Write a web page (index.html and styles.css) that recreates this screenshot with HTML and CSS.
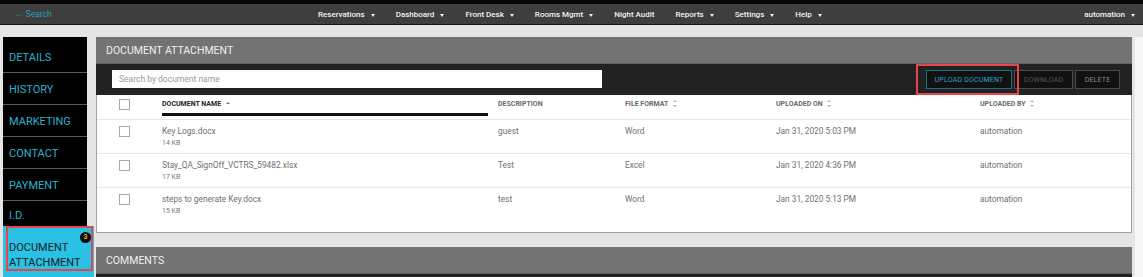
FILE: index.html
```html
<!DOCTYPE html>
<html lang="en">
<head>
    <meta charset="UTF-8">
    <meta name="viewport" content="width=device-width, initial-scale=1.0">
    <title>Document Attachment</title>
    <link rel="stylesheet" href="styles.css">
</head>
<body>

<div class="topstrip"></div>

<nav class="navbar">
    <a class="back-link" href="#">&larr; Search</a>
    <ul class="menu">
        <li class="caret">Reservations</li>
        <li class="caret">Dashboard</li>
        <li class="caret">Front Desk</li>
        <li class="caret">Rooms Mgmt</li>
        <li>Night Audit</li>
        <li class="caret">Reports</li>
        <li class="caret">Settings</li>
        <li class="caret">Help</li>
    </ul>
    <div class="user caret">automation</div>
</nav>

<div class="layout">
    <aside class="sidebar">
        <div class="side-list">
            <a class="side-item" href="#">DETAILS</a>
            <a class="side-item" href="#">HISTORY</a>
            <a class="side-item" href="#">MARKETING</a>
            <a class="side-item" href="#">CONTACT</a>
            <a class="side-item" href="#">PAYMENT</a>
            <a class="side-item last" href="#">I.D.</a>
        </div>
        <a class="side-active" href="#">
            DOCUMENT<br>ATTACHMENT
            <span class="badge">3</span>
            <span class="mark mark-side"></span>
        </a>
    </aside>

    <main class="content">
        <section class="panel">
            <header class="panel-head">DOCUMENT ATTACHMENT</header>
            <div class="toolbar">
                <input class="search" type="text" placeholder="Search by document name">
                <div class="actions">
                    <button class="btn btn-upload">UPLOAD DOCUMENT</button>
                    <button class="btn btn-download">DOWNLOAD</button>
                    <button class="btn btn-delete">DELETE</button>
                </div>
                <span class="mark mark-upload"></span>
            </div>

            <div class="doc-table">
                <div class="row head">
                    <span class="check"></span>
                    <span class="col-name">DOCUMENT NAME <i class="sort-asc"></i></span>
                    <span>DESCRIPTION</span>
                    <span>FILE FORMAT <i class="sort"></i></span>
                    <span>UPLOADED ON <i class="sort"></i></span>
                    <span>UPLOADED BY <i class="sort"></i></span>
                </div>
                <div class="row">
                    <span class="check"></span>
                    <span>Key Logs.docx<small>14 KB</small></span>
                    <span>guest</span>
                    <span>Word</span>
                    <span>Jan 31, 2020 5:03 PM</span>
                    <span>automation</span>
                </div>
                <div class="row">
                    <span class="check"></span>
                    <span>Stay_QA_SignOff_VCTRS_59482.xlsx<small>17 KB</small></span>
                    <span>Test</span>
                    <span>Excel</span>
                    <span>Jan 31, 2020 4:36 PM</span>
                    <span>automation</span>
                </div>
                <div class="row">
                    <span class="check"></span>
                    <span>steps to generate Key.docx<small>15 KB</small></span>
                    <span>test</span>
                    <span>Word</span>
                    <span>Jan 31, 2020 5:13 PM</span>
                    <span>automation</span>
                </div>
            </div>
        </section>

        <section class="panel">
            <header class="panel-head">COMMENTS</header>
            <div class="toolbar short"></div>
        </section>
    </main>

    <div class="scroll-track"></div>
</div>

</body>
</html>
```

FILE: styles.css
```css
/* Global */
body {
    margin: 0;
    background: #e5e5e5;
    font-family: Roboto, "Liberation Sans", sans-serif;
    overflow: hidden;
    height: 277px;
}

a {
    text-decoration: none;
}

/* Top bar */
.topstrip {
    height: 4px;
    background: #050505;
}

.navbar {
    display: grid;
    grid-template-columns: 318px auto 1fr;
    align-items: center;
    height: 20px;
    background: #3e3e3e;
    border-bottom: 1px solid #111;
    color: #f2f2f2;
    font-size: 8px;
    font-weight: 500;
}

.back-link {
    padding-left: 15px;
    color: #2a9dbd;
    font-size: 8.5px;
    font-weight: 400;
}

.menu {
    display: flex;
    gap: 21px;
    margin: 0;
    padding: 0;
    list-style: none;
}

.caret::after {
    content: "";
    display: inline-block;
    margin-left: 6px;
    border-left: 2.5px solid transparent;
    border-right: 2.5px solid transparent;
    border-top: 3px solid #f2f2f2;
    vertical-align: 0;
}

.user {
    justify-self: end;
    padding-right: 8px;
}

/* Layout */
.layout {
    display: flex;
    align-items: stretch;
    padding: 12px 0 0 3px;
    height: 240px;
}

/* Sidebar */
.sidebar {
    width: 91px;
    flex-shrink: 0;
}

.side-list {
    width: 84px;
    padding-top: 4px;
    background: #000;
}

.side-item {
    display: flex;
    align-items: center;
    height: 31px;
    padding: 1px 0 0 6px;
    box-sizing: border-box;
    height: 32px;
    border-bottom: 1px solid #5c5c5c;
    color: #2bb1d4;
    font-size: 11px;
}

.side-item.last {
    height: 25px;
    padding-top: 3px;
    border-bottom: none;
}

.side-active {
    position: relative;
    display: block;
    height: 56px;
    padding: 14px 0 0 6px;
    box-sizing: border-box;
    background: #29c2e4;
    color: #1c1c1c;
    font-size: 11px;
    line-height: 15px;
}

.badge {
    position: absolute;
    left: 77px;
    top: 6px;
    width: 11px;
    height: 11px;
    border-radius: 50%;
    background: #0a0a0a;
    color: #e0a81a;
    font-size: 7px;
    font-weight: bold;
    line-height: 11px;
    text-align: center;
}

/* Red highlight boxes */
.mark {
    position: absolute;
    box-sizing: border-box;
    border: 2px solid #e5464a;
    pointer-events: none;
}

.mark-side {
    left: 3px;
    top: 0;
    width: 87px;
    height: 45px;
}

.mark-upload {
    right: 113px;
    top: 0;
    width: 103px;
    height: 31px;
}

/* Content panels */
.content {
    width: 1036px;
    margin-left: 2px;
    flex-shrink: 0;
}

.panel-head {
    height: 26px;
    padding-left: 10px;
    background: #737373;
    border-bottom: 1px solid #5e5e5e;
    color: #f0f0f0;
    font-size: 10.5px;
    line-height: 27px;
}

.toolbar {
    position: relative;
    display: flex;
    align-items: flex-start;
    justify-content: space-between;
    height: 31px;
    padding: 6px 12px 0 16px;
    box-sizing: border-box;
    background: #222;
}

.toolbar.short {
    height: 8px;
}

.search {
    width: 490px;
    height: 18px;
    box-sizing: border-box;
    padding: 0 7px;
    border: none;
    font-family: inherit;
    font-size: 8.5px;
}

.search::placeholder {
    color: #9a9a9a;
}

.actions {
    display: flex;
    gap: 2px;
}

.btn {
    height: 19px;
    padding: 0;
    background: #111;
    border: 1px solid #4a4a4a;
    font-family: inherit;
    font-size: 7px;
    letter-spacing: 0.2px;
}

.btn-upload {
    width: 86px;
    border-color: #1f6f82;
    color: #2aa6c8;
}

.btn-download {
    width: 59px;
    color: #555;
}

.btn-delete {
    width: 45px;
    color: #8a8a8a;
}

/* Document table */
.doc-table {
    background: #fff;
    border: 1px solid #a2a2a2;
    border-top: none;
    padding-bottom: 10px;
    margin-bottom: 14px;
}

.row {
    display: grid;
    grid-template-columns: 43px 336px 127px 151px 204px 1fr;
    align-items: start;
    height: 34px;
    padding: 6px 0 0 22px;
    box-sizing: border-box;
    border-bottom: 1px solid #e6e6e6;
    color: #707070;
    font-size: 8.3px;
    line-height: 11px;
}

.row:last-child {
    border-bottom: none;
}

.row.head {
    height: 25px;
    padding-top: 4px;
    color: #6a6a6a;
    font-size: 7px;
    font-weight: bold;
    line-height: 10px;
}

.row small {
    display: block;
    margin-top: 1px;
    font-size: 7px;
    color: #777;
}

.check {
    width: 11px;
    height: 11px;
    box-sizing: border-box;
    border: 1px solid #a8a8a8;
    background: #fff;
}

.col-name {
    margin-right: 10px;
    padding-bottom: 4px;
    border-bottom: 3px solid #111;
    color: #222;
}

.sort,
.sort-asc {
    display: inline-block;
    position: relative;
    width: 5px;
    height: 7px;
    margin-left: 3px;
    vertical-align: -1px;
}

.sort::before,
.sort::after,
.sort-asc::before {
    content: "";
    position: absolute;
    left: 0;
    border-left: 2.5px solid transparent;
    border-right: 2.5px solid transparent;
}

.sort::before {
    top: 0;
    border-bottom: 2.5px solid #b5b5b5;
}

.sort::after {
    bottom: 0;
    border-top: 2.5px solid #b5b5b5;
}

.sort-asc::before {
    top: 2px;
    border-bottom: 2.5px solid #777;
}

.scroll-track {
    width: 8px;
    margin-left: 3px;
    background: #f7f7f7;
}
```
